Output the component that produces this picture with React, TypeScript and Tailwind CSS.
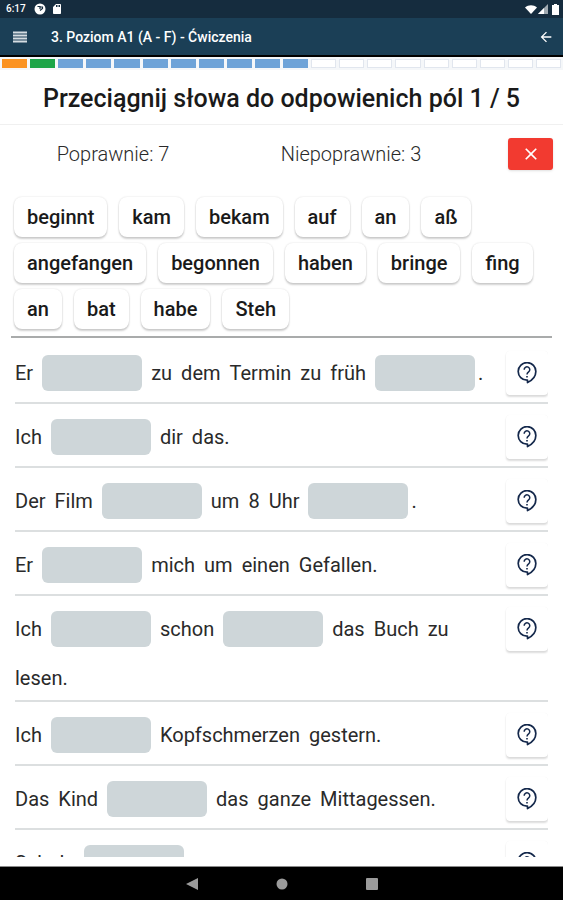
import React from 'react';
import { MdArrowBack, MdClose, MdSdCard } from 'react-icons/md';

const TOTAL_STEPS = 20;
const STEPS_DONE = 11;

const words = [
  'beginnt', 'kam', 'bekam', 'auf', 'an', 'aß',
  'angefangen', 'begonnen', 'haben', 'bringe', 'fing',
  'an', 'bat', 'habe', 'Steh',
];

// "_" marks a gap the learner has to fill
const sentences = [
  'Er _ zu dem Termin zu früh _.',
  'Ich _ dir das.',
  'Der Film _ um 8 Uhr _.',
  'Er _ mich um einen Gefallen.',
  'Ich _ schon _ das Buch zu lesen.',
  'Ich _ Kopfschmerzen gestern.',
  'Das Kind _ das ganze Mittagessen.',
  'Schule _',
];

const StatusBar: React.FC = () => (
  <div className="flex h-[18px] shrink-0 items-center bg-[#152c3e] pl-[6px] pr-1 text-white">
    <span className="text-[10px] font-medium leading-none">6:17</span>
    <svg className="ml-2 size-3" viewBox="0 0 12 12">
      <circle cx="6" cy="6" r="5.5" fill="currentColor" />
      <path d="M3.5 3.5 H6 V6 M6 4 H8.5 V5.5 L6 7.5" fill="none" stroke="#152c3e" strokeWidth="1.2" />
    </svg>
    <MdSdCard className="ml-[5px] size-3" />
    <div className="ml-auto flex items-center gap-[1px]">
      <svg className="h-[9px] w-3" viewBox="0 0 12 9">
        <path d="M0 2.5 C3.5 -0.5 8.5 -0.5 12 2.5 L6 9 Z" fill="currentColor" />
      </svg>
      <svg className="size-[10px]" viewBox="0 0 10 10">
        <path d="M0 10 L10 0 V10 Z" fill="currentColor" opacity="0.6" />
        <path d="M0 10 L6 4 V10 Z" fill="currentColor" />
      </svg>
      <svg className="ml-[3px] h-[11px] w-[7px]" viewBox="0 0 7 11">
        <path d="M2 0 H5 V1 H7 V11 H0 V1 H2 Z" fill="currentColor" />
      </svg>
    </div>
  </div>
);

const AppBar: React.FC = () => (
  <header className="flex h-[37px] shrink-0 items-center bg-[#1b3f56] px-[13px] text-white">
    <button type="button" aria-label="Menu">
      <svg className="h-3 w-[14px]" viewBox="0 0 14 12">
        <path d="M0 1.5 H14 M0 4.5 H14 M0 7.5 H14 M0 10.5 H14" stroke="#d5dce1" strokeWidth="2" />
      </svg>
    </button>
    <h2 className="ml-6 text-sm font-medium">3. Poziom A1 (A - F) - Ćwiczenia</h2>
    <button type="button" aria-label="Wstecz" className="ml-auto -mr-1">
      <MdArrowBack className="size-4" />
    </button>
  </header>
);

const stepClass = (index: number) => {
  if (index === 0) return 'bg-[#fb9322]';
  if (index === 1) return 'bg-[#1ba548]';
  if (index < STEPS_DONE) return 'bg-[#6ea3d8]';
  return 'border border-[#e1e6ee] bg-white';
};

const Progress: React.FC = () => (
  <div className="grid shrink-0 grid-cols-20 gap-[3px] border-t-2 border-black bg-[#f5f7f9] px-[2px] pb-[2px] pt-[2px]">
    {Array.from({ length: TOTAL_STEPS }, (_, i) => (
      <div key={i} className={`h-[9px] ${stepClass(i)}`} />
    ))}
  </div>
);

const HintIcon: React.FC = () => (
  <svg className="h-[22px] w-5" viewBox="0 0 20 22" fill="none" stroke="currentColor">
    <path
      d="M10.5 18.2 V20.6 C15.5 18.2 18.8 14 18.8 9.8 A8.8 8.8 0 1 0 10 18.2 Z"
      strokeWidth="1.7"
      strokeLinejoin="round"
    />
    <path d="M7.2 7.8 A2.8 2.8 0 1 1 11.6 9.9 C10.4 10.8 10 11.3 10 12.6" strokeWidth="1.5" />
    <path d="M10 14 V15.6" strokeWidth="1.6" />
  </svg>
);

const Blank: React.FC = () => <span className="h-9 w-[100px] rounded-md bg-[#ced6d9]" />;

const SentenceRow: React.FC<{ sentence: string }> = ({ sentence }) => (
  <li className="flex items-start justify-between border-b-2 border-[#dcdfe0] pb-[10px] pt-[11px]">
    <p className="flex flex-1 flex-wrap items-center gap-x-[9px] gap-y-[18px] pt-[3px] text-xl/6">
      {sentence.split(' ').map((token, i) =>
        token.startsWith('_') ? (
          <span key={i} className="flex h-[38px] items-center">
            <Blank />
            {token.length > 1 && <span className="ml-[3px]">{token.slice(1)}</span>}
          </span>
        ) : (
          <span key={i}>{token}</span>
        )
      )}
    </p>
    {/* row height comes from the text, the button only sits beside it */}
    <button
      type="button"
      aria-label="Podpowiedź"
      className="-mb-2 flex h-11 w-[42px] items-center justify-center rounded-sm bg-white text-[#14284b] shadow-[0_2px_2px_rgba(0,0,0,0.14),0_0_1px_rgba(0,0,0,0.06)]"
    >
      <HintIcon />
    </button>
  </li>
);

const NavBar: React.FC = () => (
  <nav className="flex h-[34px] shrink-0 items-center justify-center gap-[78px] border-t border-[#8a8a8a] bg-black text-[#9b9b9b]">
    <button type="button" aria-label="Back">
      <svg className="size-3" viewBox="0 0 12 12">
        <path d="M12 0 V12 L0 6 Z" fill="currentColor" />
      </svg>
    </button>
    <button type="button" aria-label="Home">
      <svg className="size-3" viewBox="0 0 12 12">
        <circle cx="6" cy="6" r="5.5" fill="currentColor" />
      </svg>
    </button>
    <button type="button" aria-label="Recents">
      <svg className="size-3" viewBox="0 0 12 12">
        <rect width="12" height="12" rx="1" fill="currentColor" />
      </svg>
    </button>
  </nav>
);

const App: React.FC = () => {
  return (
    <div className="flex h-screen flex-col bg-white font-['Roboto',sans-serif] text-[#2a2a2a]">
      <StatusBar />
      <AppBar />
      <Progress />

      <h1 className="shrink-0 border-b border-[#f0f0f0] pb-[9px] pt-[13px] text-center text-[25px]/8 font-medium text-[#1a1a1a]">
        Przeciągnij słowa do odpowienich pól 1 / 5
      </h1>

      <div className="mr-[10px] mt-[13px] flex shrink-0 items-center text-xl font-light">
        <span className="flex-1 pr-3 text-center">Poprawnie: 7</span>
        <span className="flex-1 pr-1 text-center">Niepoprawnie: 3</span>
        <button
          type="button"
          aria-label="Zamknij"
          className="ml-10 flex h-8 w-[45px] items-center justify-center rounded-[3px] bg-[#f23a30] text-white shadow-sm"
        >
          <MdClose className="size-5" />
        </button>
      </div>

      <div className="mx-[11px] mt-[27px] flex shrink-0 flex-wrap gap-x-3 gap-y-[6px] border-b-2 border-[#a9abab] px-[3px] pb-[7px]">
        {words.map((word, i) => (
          <button
            key={i}
            type="button"
            className="h-10 rounded-lg bg-white px-[13px] text-xl font-medium text-[#1a1a1a] shadow-[0_2px_2px_rgba(0,0,0,0.18),0_0_2px_rgba(0,0,0,0.14)]"
          >
            {word}
          </button>
        ))}
      </div>

      <ul className="mx-[15px] mb-[9px] mt-[2px] min-h-0 flex-1 overflow-hidden">
        {sentences.map((sentence) => (
          <SentenceRow key={sentence} sentence={sentence} />
        ))}
      </ul>

      <NavBar />
    </div>
  );
};

export default App;
